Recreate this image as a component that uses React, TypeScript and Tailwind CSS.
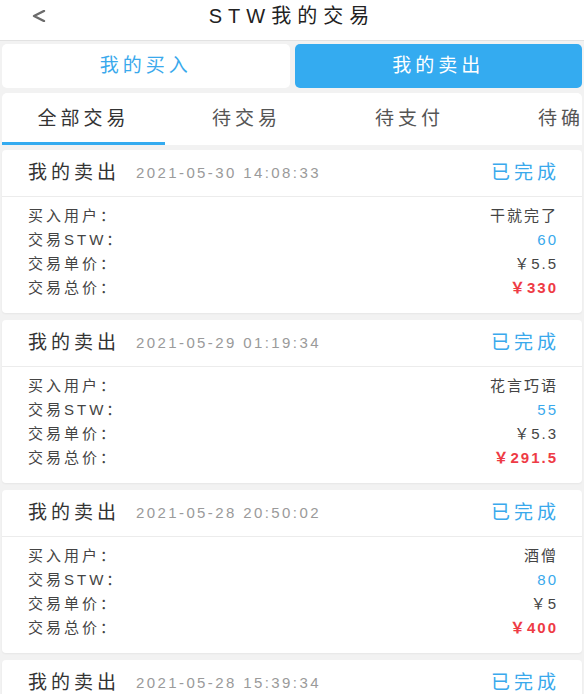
import React from "react";

const font = { fontFamily: '"Liberation Sans", "Noto Sans CJK SC", sans-serif' };

type Trade = { date: string; user: string; qty: string; price: string; total: string };

const trades: Trade[] = [
  { date: "2021-05-30 14:08:33", user: "干就完了", qty: "60", price: "￥5.5", total: "￥330" },
  { date: "2021-05-29 01:19:34", user: "花言巧语", qty: "55", price: "￥5.3", total: "￥291.5" },
  { date: "2021-05-28 20:50:02", user: "酒僧", qty: "80", price: "￥5", total: "￥400" },
  { date: "2021-05-28 15:39:34", user: "天天向上", qty: "50", price: "￥5", total: "￥250" },
];

function Row({ label, value, valueClass }: { label: string; value: string; valueClass: string }) {
  return (
    <div className="flex h-[24px] items-center justify-between">
      <span className="text-[15px] tracking-[3px] text-[#444]">{label}</span>
      <span className={`text-[15px] tracking-[2px] -mr-[2px] ${valueClass}`}>{value}</span>
    </div>
  );
}

function Card({ t }: { t: Trade }) {
  return (
    <div className="mx-[2px] rounded-[4px] bg-white shadow-[0_1px_2px_rgba(0,0,0,0.05)]">
      <div className="flex h-[47px] items-center border-b border-[#ececec] pl-[26px] pr-[26px]">
        <span className="text-[19px] tracking-[4px] text-[#333]">我的卖出</span>
        <span className="ml-[16px] text-[15px] tracking-[2.4px] text-[#9a9a9a]">{t.date}</span>
        <span className="ml-auto -mr-[4px] text-[19px] tracking-[4px] text-[#3aa9ec]">已完成</span>
      </div>
      <div className="pl-[26px] pr-[26px] pt-[7px] pb-[13px]">
        <Row label="买入用户：" value={t.user} valueClass="text-[#444]" />
        <Row label="交易STW：" value={t.qty} valueClass="text-[#3aa9ec]" />
        <Row label="交易单价：" value={t.price} valueClass="text-[#444]" />
        <Row label="交易总价：" value={t.total} valueClass="text-[#ee3b45] font-bold" />
      </div>
    </div>
  );
}

export default function App() {
  const tabs = ["全部交易", "待交易", "待支付", "待确认"];
  return (
    <div className="h-[694px] w-[584px] overflow-hidden bg-[#f2f2f2]" style={font}>
      <div className="relative flex h-[41px] items-center justify-center border-b border-[#e2e2e2] bg-white">
        <svg className="absolute left-[32px] top-[10px]" width="14" height="12" viewBox="0 0 14 12">
          <polyline points="12,1 2,6 12,11" fill="none" stroke="#6b6b6b" strokeWidth="2.4" strokeLinejoin="round" strokeLinecap="round" />
        </svg>
        <span className="-mt-[8px] text-[20px] tracking-[6px] text-[#222]">STW我的交易</span>
      </div>

      <div className="mt-[3px] flex gap-[5px] px-[2px]">
        <div className="flex h-[44px] flex-1 items-center justify-center rounded-[5px] bg-white text-[19px] tracking-[4px] text-[#3aa9ec]">
          我的买入
        </div>
        <div className="flex h-[44px] flex-1 items-center justify-center rounded-[5px] bg-[#34abf0] text-[19px] tracking-[4px] text-white">
          我的卖出
        </div>
      </div>

      <div className="mx-[2px] mt-[5px] flex h-[52px] overflow-hidden rounded-t-[5px] bg-white">
        {tabs.map((tab, i) => (
          <div
            key={tab}
            className={`relative flex h-full w-[163px] shrink-0 items-center justify-center text-[19px] tracking-[4px] ${i === 0 ? "text-[#333]" : "text-[#555]"}`}
          >
            <span>{tab}</span>
            {i === 0 && <div className="absolute bottom-0 left-0 h-[3px] w-full bg-[#34abf0]" />}
          </div>
        ))}
      </div>

      <div className="mt-[5px] flex flex-col gap-[7px]">
        {trades.map((t) => (
          <Card key={t.date} t={t} />
        ))}
      </div>
    </div>
  );
}
